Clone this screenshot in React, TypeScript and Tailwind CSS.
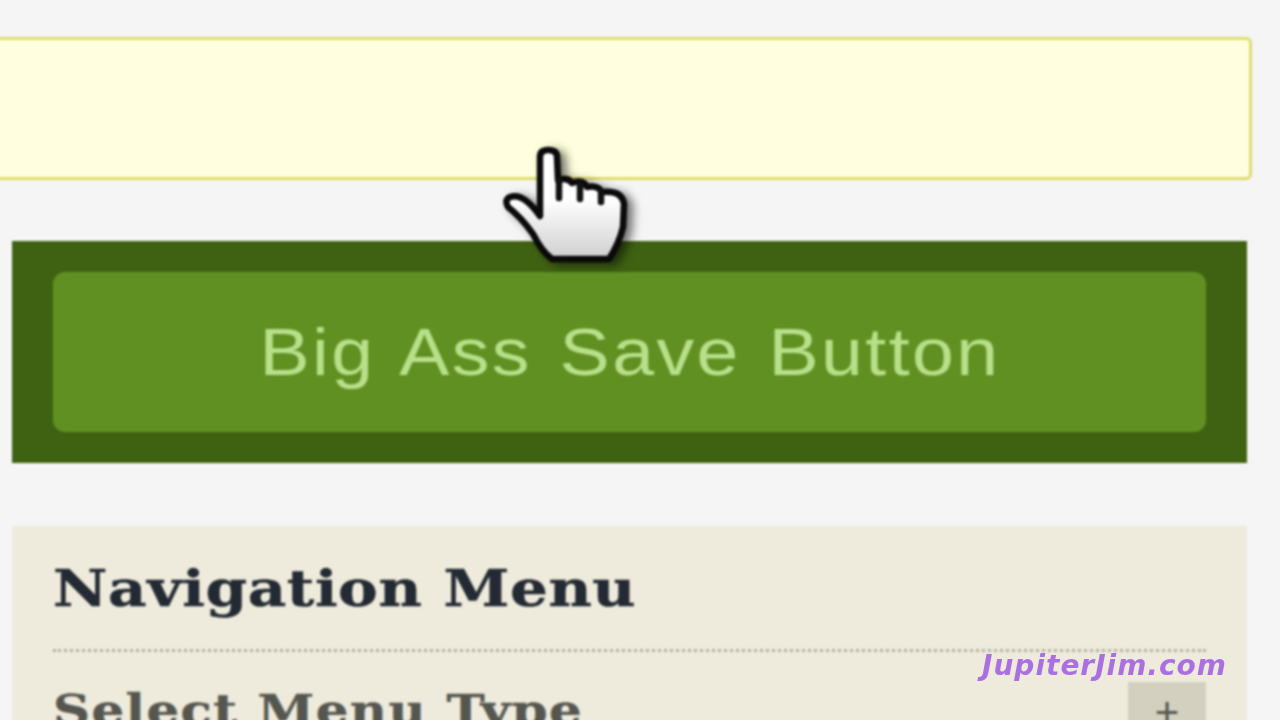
import React from "react";

function HandCursor() {
  return (
    <svg
      width="170"
      height="150"
      viewBox="0 0 170 150"
      className="absolute left-[480px] top-[130px] blur-[0.9px] drop-shadow-[6px_3px_5px_rgba(0,0,0,0.55)]"
    >
      <defs>
        <linearGradient id="handFill" x1="0" y1="0" x2="0" y2="1">
          <stop offset="0.45" stopColor="#ffffff" />
          <stop offset="1" stopColor="#cfcfcf" />
        </linearGradient>
      </defs>
      <path
        d="M60 86 L60 27 Q60 20 68 20 Q77 20 77 27 L78 50 Q88 47 92 53 Q103 49 107 57 Q118 55 122 62 Q142 60 144 74 L143 97 Q139 114 129 129 L72 129 Q62 122 53 104 Q42 88 28 77 Q24 70 30 67 Q43 62 60 86 Z"
        fill="url(#handFill)"
        stroke="#0a0a0a"
        strokeWidth="6.5"
        strokeLinejoin="round"
      />
      <path d="M79 50 L79 68 M100 54 L100 69 M121 62 L121 72" stroke="#111111" strokeWidth="6.5" strokeLinecap="round" fill="none" />
    </svg>
  );
}

export default function App() {
  return (
    <div className="relative w-[1280px] h-[720px] overflow-hidden bg-[#f5f5f6]">
      <div className="flex flex-col pt-[37px] blur-[0.8px]">
        {/* Text input */}
        <div className="ml-[-12px] w-[1264px] h-[143px] bg-[#ffffdf] border-[3px] border-[#dfdc6c] rounded-[6px]" />

        {/* Save button */}
        <div className="mt-[61px] mx-[12px] w-[1235px] h-[222px] bg-[#3f6212] px-[41px] pt-[31px]">
          <div className="h-[160px] rounded-[12px] bg-[#619022] flex items-center justify-center">
            <span className="font-['Liberation_Sans',sans-serif] text-[66px] scale-x-[1.14] tracking-[2.1px] [word-spacing:4px] text-[#b8e08a] leading-none">
              Big Ass Save Button
            </span>
          </div>
        </div>

        {/* Navigation panel */}
        <div className="mt-[63px] mx-[12px] w-[1235px] h-[300px] bg-[#eeebdc] px-[41px] pt-[36px]">
          <h2 className="origin-left scale-x-[1.19] font-['DejaVu_Serif',serif] font-bold text-[50px] tracking-[0.5px] leading-[54px] text-[#232a33] [-webkit-text-stroke:0.5px_#232a33]">
            Navigation Menu
          </h2>
          <div className="mt-[33px] border-t-[3px] border-dotted border-[#b3b1a4]" />
          <div className="mt-[36px] flex items-start justify-between">
            <h3 className="origin-left scale-x-[1.22] font-['DejaVu_Serif',serif] font-bold text-[42px] tracking-[1.2px] leading-[46px] text-[#55564f] [-webkit-text-stroke:0.5px_#55564f]">
              Select Menu Type
            </h3>
            <div className="mt-[-6px] w-[78px] h-[78px] bg-[#d3d0bf] flex justify-center pt-[8px] font-['Liberation_Sans',sans-serif] text-[42px] leading-[46px] text-[#55564f]">
              +
            </div>
          </div>
        </div>
      </div>

      <HandCursor />

      <span className="absolute left-[982px] top-[649px] font-['DejaVu_Sans',sans-serif] font-bold italic text-[28px] tracking-[1px] leading-[34px] text-[#aa70e2]">
        JupiterJim.com
      </span>
    </div>
  );
}
